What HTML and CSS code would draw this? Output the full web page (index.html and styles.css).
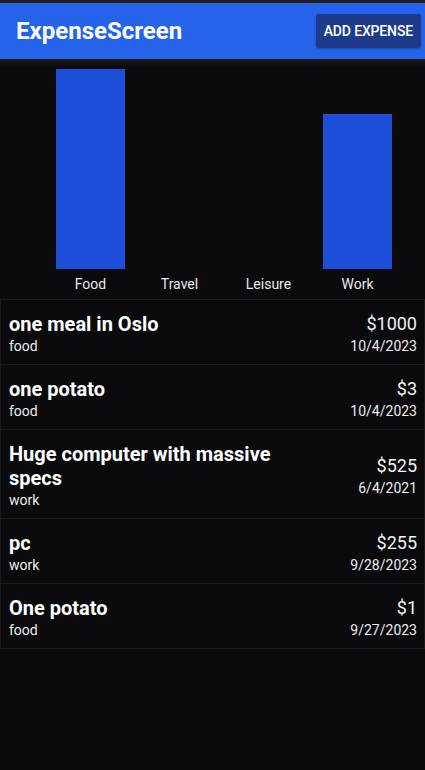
FILE: index.html
```html
<!DOCTYPE html>
<html>
<head>
<meta charset="utf-8">
<link rel="stylesheet" href="styles.css">
</head>
<body>
<div class="status"></div>
<header class="appbar">
  <h1 class="title">ExpenseScreen</h1>
  <button class="add-btn">ADD EXPENSE</button>
</header>
<main class="content">
  <section class="chart">
    <div class="col">
      <div class="bar-area"><div class="bar" style="height:200px"></div></div>
      <div class="label">Food</div>
    </div>
    <div class="col">
      <div class="bar-area"></div>
      <div class="label">Travel</div>
    </div>
    <div class="col">
      <div class="bar-area"></div>
      <div class="label">Leisure</div>
    </div>
    <div class="col">
      <div class="bar-area"><div class="bar" style="height:155px"></div></div>
      <div class="label">Work</div>
    </div>
  </section>
  <ul class="list">
    <li class="row">
      <div class="left"><div class="name">one meal in Oslo</div><div class="cat">food</div></div>
      <div class="right"><div class="amount">$1000</div><div class="date">10/4/2023</div></div>
    </li>
    <li class="row">
      <div class="left"><div class="name">one potato</div><div class="cat">food</div></div>
      <div class="right"><div class="amount">$3</div><div class="date">10/4/2023</div></div>
    </li>
    <li class="row">
      <div class="left"><div class="name">Huge computer with massive specs</div><div class="cat">work</div></div>
      <div class="right"><div class="amount">$525</div><div class="date">6/4/2021</div></div>
    </li>
    <li class="row">
      <div class="left"><div class="name">pc</div><div class="cat">work</div></div>
      <div class="right"><div class="amount">$255</div><div class="date">9/28/2023</div></div>
    </li>
    <li class="row">
      <div class="left"><div class="name">One potato</div><div class="cat">food</div></div>
      <div class="right"><div class="amount">$1</div><div class="date">9/27/2023</div></div>
    </li>
  </ul>
</main>
</body>
</html>
```
FILE: styles.css
```css
* { box-sizing: border-box; }
html, body {
  margin: 0;
  padding: 0;
  height: 100%;
}
body {
  background: #0a0a0c;
  font-family: Roboto, "Noto Sans", sans-serif;
  color: #fff;
}
.status {
  height: 3px;
  background: #222224;
}
.appbar {
  height: 56px;
  background: #2563eb;
  display: flex;
  align-items: flex-start;
  justify-content: space-between;
  padding: 0 4px 0 16px;
  position: relative;
  z-index: 1;
}
.title {
  margin: 0;
  font-size: 24px;
  line-height: 56px;
  font-weight: 700;
  color: #fff;
}
.add-btn {
  height: 34px;
  margin-top: 11px;
  padding: 0 8px;
  background: #1e3a8a;
  color: #fff;
  border: none;
  border-radius: 3px;
  font-family: Roboto, sans-serif;
  font-size: 14px;
  font-weight: 500;
  letter-spacing: -0.15px;
  box-shadow: 0 1px 2px rgba(0,0,0,0.25);
}
.content {
  background: linear-gradient(#1c1c1e 0, #0a0a0c 8px);
}
.chart {
  display: grid;
  grid-template-columns: repeat(4, 89px);
  padding: 10px 0 5px 46px;
}
.col {
  display: flex;
  flex-direction: column;
  align-items: center;
}
.bar-area {
  height: 200px;
  width: 100%;
  display: flex;
  align-items: flex-end;
  justify-content: center;
}
.bar {
  width: 69px;
  background: #1d4ed8;
}
.label {
  margin-top: 5px;
  font-size: 14px;
  line-height: 20px;
  color: #e8e8e8;
}
.list {
  list-style: none;
  margin: 0;
  padding: 0;
  border-top: 1px solid #1a1a1c;
}
.row {
  display: flex;
  justify-content: space-between;
  align-items: center;
  padding: 12px 7px 8px 8px;
  border: 1px solid #1a1a1c;
  border-top: none;
}
.left {
  max-width: 290px;
}
.name {
  font-size: 20px;
  font-weight: 700;
  line-height: 24px;
}
.cat {
  font-size: 14px;
  line-height: 20px;
  color: #ececec;
}
.right {
  text-align: right;
}
.amount {
  font-size: 18px;
  line-height: 24px;
  color: #f2f2f2;
}
.date {
  font-size: 14px;
  line-height: 20px;
  color: #ececec;
}
```
